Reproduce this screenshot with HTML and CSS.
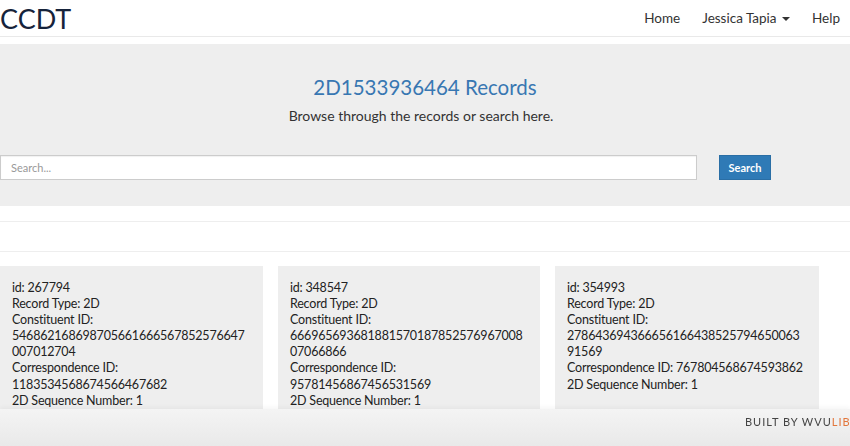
FILE: index.html
```html
<!DOCTYPE html>
<html>
<head>
<meta charset="utf-8">
<link rel="stylesheet" href="styles.css">
</head>
<body>
<nav class="navbar">
  <a class="brand">CCDT</a>
  <ul class="nav-links">
    <li><a>Home</a></li>
    <li><a>Jessica Tapia <span class="caret"></span></a></li>
    <li><a>Help</a></li>
  </ul>
</nav>
<section class="jumbo">
  <h1 class="title">2D1533936464 Records</h1>
  <p class="lead">Browse through the records or search here.</p>
  <form class="search-row">
    <input class="search-input" type="text" placeholder="Search...">
    <button class="search-btn" type="button">Search</button>
  </form>
</section>
<div class="divider-band"></div>
<main class="cards">
  <div class="card">
    <div>id: 267794</div>
    <div>Record Type: 2D</div>
    <div>Constituent ID: 546862168698705661666567852576647007012704</div>
    <div>Correspondence ID: 1183534568674566467682</div>
    <div>2D Sequence Number: 1</div>
  </div>
  <div class="card">
    <div>id: 348547</div>
    <div>Record Type: 2D</div>
    <div>Constituent ID: 66696569368188157018785257696700807066866</div>
    <div>Correspondence ID: 95781456867456531569</div>
    <div>2D Sequence Number: 1</div>
  </div>
  <div class="card">
    <div>id: 354993</div>
    <div>Record Type: 2D</div>
    <div>Constituent ID: 27864369436665616643852579465006391569</div>
    <div>Correspondence ID: 767804568674593862</div>
    <div>2D Sequence Number: 1</div>
  </div>
</main>
<footer class="footer">
  <div class="footer-text">BUILT BY WVU<span class="orange">LIBRARIES</span></div>
</footer>
</body>
</html>
```
FILE: styles.css
```css
* { box-sizing: border-box; }
html, body { margin: 0; padding: 0; }
body {
  font-family: Lato, "Open Sans", "Liberation Sans", sans-serif;
  color: #333;
  background: #fff;
  overflow: hidden;
  height: 446px;
}
.navbar {
  display: flex;
  justify-content: space-between;
  align-items: center;
  height: 37px;
  border-bottom: 1px solid #e9e9e9;
}
.brand {
  font-size: 27px;
  color: #16233b;
  line-height: 37px;
}
.nav-links {
  list-style: none;
  margin: 0;
  padding: 0;
  display: flex;
}
.nav-links a {
  display: block;
  padding: 0 11px;
  font-size: 13.5px;
  color: #333;
  line-height: 37px;
}
.nav-links li:last-child a { padding-right: 10px; }
.caret {
  display: inline-block;
  width: 0;
  height: 0;
  margin-left: 2px;
  vertical-align: middle;
  border-top: 4px solid #333;
  border-left: 4px solid transparent;
  border-right: 4px solid transparent;
}
.jumbo {
  margin-top: 7px;
  background: #eeeeee;
  padding: 30px 0 26px;
  text-align: center;
}
.title {
  margin: 0;
  font-size: 20.5px;
  line-height: 26px;
  font-weight: 400;
  color: #3877b2;
}
.lead {
  margin: 6px 0 29px;
  font-size: 14px;
  line-height: 20px;
  color: #333;
  padding-right: 8px;
}
.search-row {
  display: flex;
  align-items: center;
  margin: 0;
}
.search-input {
  width: 697px;
  height: 25px;
  border: 1px solid #cccccc;
  box-shadow: inset 0 1px 1px rgba(0,0,0,0.06);
  padding: 0 10px;
  font-family: inherit;
  font-size: 11px;
  color: #555;
  background: #fff;
  outline: none;
  margin: 0;
}
.search-input::placeholder { color: #999; }
.search-btn {
  margin-left: 22px;
  width: 52px;
  height: 25px;
  border: 1px solid #2a6ea5;
  background: #2f7ab6;
  color: #fff;
  font-family: inherit;
  font-size: 11px;
  font-weight: 700;
  padding: 0;
}
.divider-band {
  margin-top: 15px;
  height: 31px;
  border-top: 1px solid #eeeeee;
  border-bottom: 1px solid #eeeeee;
}
.cards {
  margin-top: 14px;
  display: grid;
  grid-template-columns: 263px 262px 264px;
  column-gap: 15px;
}
.card {
  background: #eeeeee;
  padding: 14px 14px 20px 12px;
  font-size: 12.5px;
  line-height: 16.1px;
  letter-spacing: -0.2px;
  color: #222;
  overflow-wrap: break-word;
  min-height: 160px;
}
.footer {
  position: fixed;
  left: 0;
  right: 0;
  bottom: 0;
  height: 37px;
  background: linear-gradient(#f4f4f4, #e9e9e9);
  box-shadow: 0 -2px 4px rgba(0,0,0,0.04);
  overflow: hidden;
}
.footer-text {
  padding: 6px 0 0 745px;
  white-space: nowrap;
  font-size: 11px;
  letter-spacing: 1px;
  color: #444;
}
.orange { color: #e2763c; }
```
